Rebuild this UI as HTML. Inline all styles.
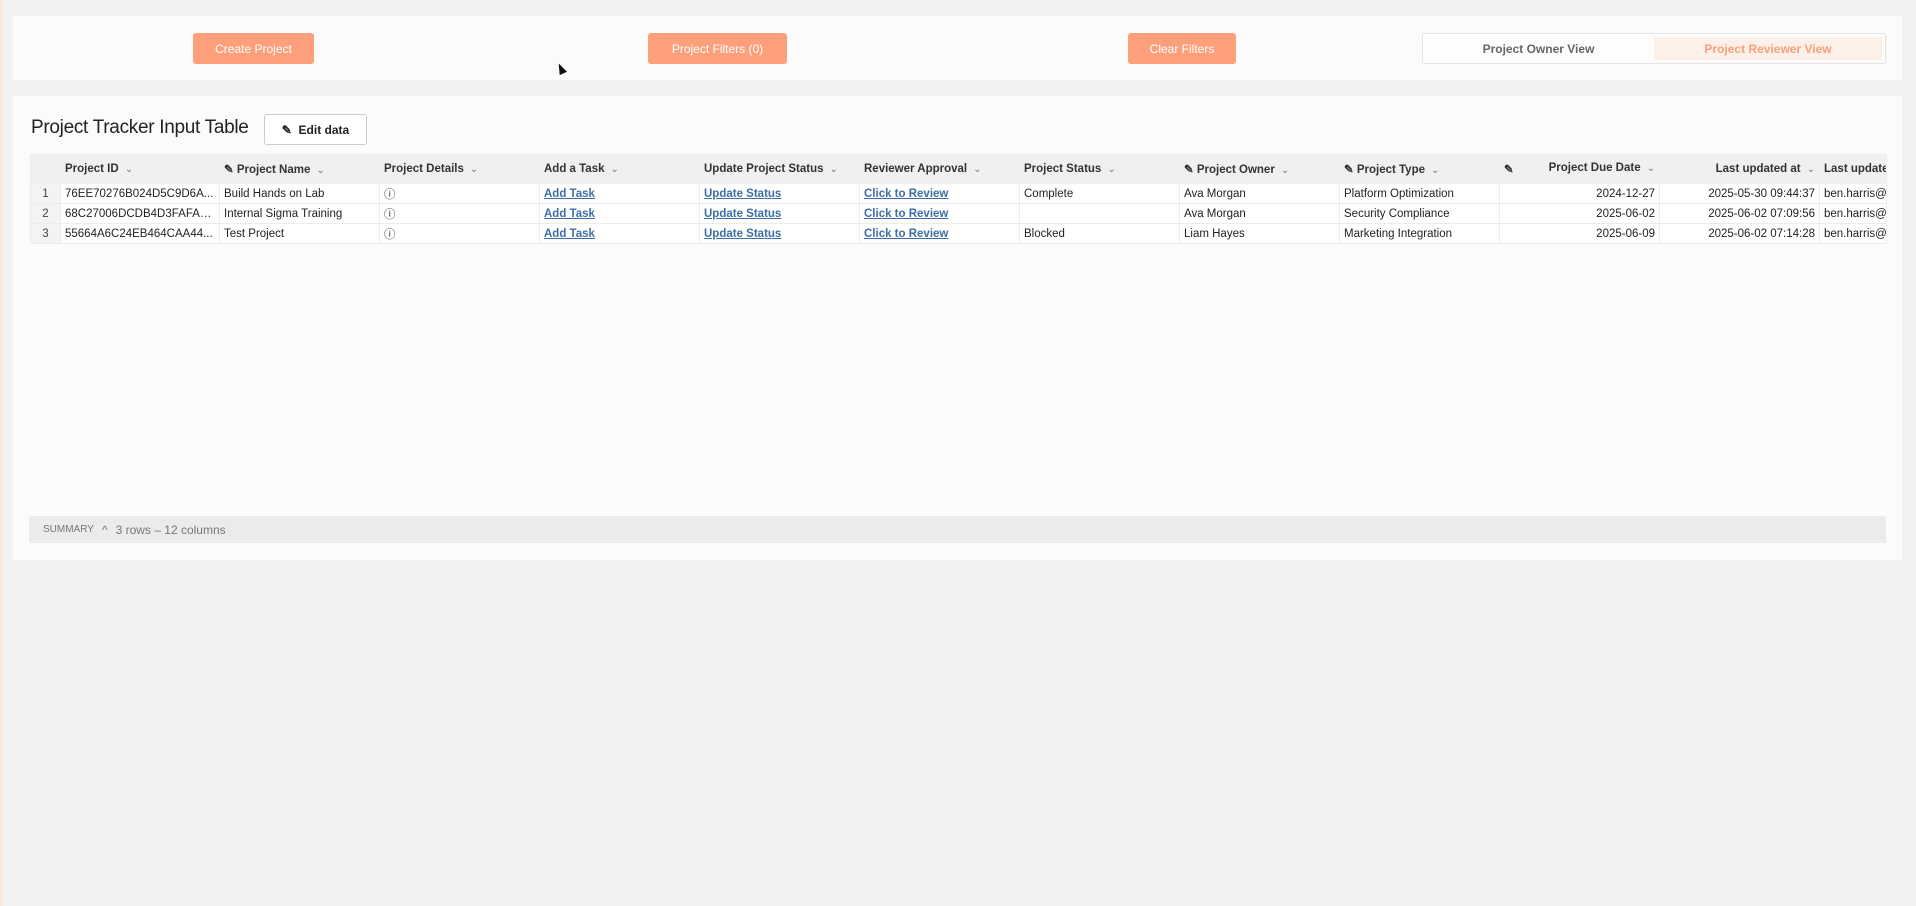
<!DOCTYPE html>
<html><head><meta charset="utf-8"><style>
*{box-sizing:border-box;margin:0;padding:0}
body{width:1916px;height:906px;background:#f2f2f2;font-family:"Liberation Sans",sans-serif;position:relative;overflow:hidden;color:#222}
.p{position:absolute;background:#fbfbfb}
.btn{position:absolute;top:33px;height:31px;background:#fd9f7b;color:#fff;border-radius:3px;font-size:12px;display:flex;align-items:center;justify-content:center}
.tog{position:absolute;left:1422px;top:33px;width:464px;height:31px;border:1px solid #e3e3e3;border-radius:3px;background:#fdfdfd;font-size:12px;font-weight:bold}
.abs{position:absolute}
table{position:absolute;left:30px;top:154px;border-collapse:collapse;font-size:11.5px;table-layout:fixed;width:1856px}
td,th{border:1px solid #ececec;height:20px;padding:0 4px;white-space:nowrap;overflow:hidden;text-overflow:ellipsis}
th{height:29px;background:#f0f0f0;text-align:left;font-weight:600;color:#333;border-color:#f0f0f0}
tr.r td{background:#fff}
td.n{background:#f3f3f3!important;text-align:center;color:#444}
.ch{color:#777;font-weight:normal;font-size:10px;margin-left:6px}
a{color:#3d6ea6;font-weight:600;text-decoration:underline}
.R{text-align:right}
</style></head><body>
<div class="abs" style="left:0;top:0;width:3px;height:906px;background:#fbe6dc"></div>
<div class="p" style="left:13px;top:16px;width:1889px;height:64px"></div>
<div class="btn" style="left:193px;width:121px">Create Project</div>
<div class="btn" style="left:648px;width:139px">Project Filters (0)</div>
<div class="btn" style="left:1128px;width:108px">Clear Filters</div>
<div class="tog">
<div class="abs" style="left:0;top:0;width:231px;height:29px;display:flex;align-items:center;justify-content:center;color:#666">Project Owner View</div>
<div class="abs" style="left:231px;top:3px;width:228px;height:23px;background:#fdf0e9;display:flex;align-items:center;justify-content:center;color:#fa9f7c">Project Reviewer View</div>
</div>
<div class="abs" style="left:557px;top:63px;width:0;height:0;border-left:4px solid transparent;border-right:4px solid transparent;border-bottom:11px solid #111;transform:rotate(-25deg)"></div>
<div class="p" style="left:13px;top:96px;width:1889px;height:464px"></div>
<div class="abs" style="left:31px;top:117px;font-size:19px;color:#222;width:225px;white-space:nowrap;letter-spacing:-0.3px">Project Tracker Input Table</div>
<div class="abs" style="left:264px;top:114px;width:103px;height:31px;border:1px solid #ccc;border-radius:3px;background:#fff;font-size:12px;font-weight:600;display:flex;align-items:center;justify-content:center">✎&nbsp;&nbsp;Edit data</div>
<table>
<colgroup><col style="width:30px"><col style="width:159px"><col style="width:160px"><col style="width:160px"><col style="width:160px"><col style="width:160px"><col style="width:160px"><col style="width:160px"><col style="width:160px"><col style="width:160px"><col style="width:160px"><col style="width:160px"><col style="width:67px"></colgroup>
<tr><th></th><th>Project ID<span class="ch">⌄</span></th><th>✎ Project Name<span class="ch">⌄</span></th><th>Project Details<span class="ch">⌄</span></th><th>Add a Task<span class="ch">⌄</span></th><th>Update Project Status<span class="ch">⌄</span></th><th>Reviewer Approval<span class="ch">⌄</span></th><th>Project Status<span class="ch">⌄</span></th><th>✎ Project Owner<span class="ch">⌄</span></th><th>✎ Project Type<span class="ch">⌄</span></th><th><span style="float:left">✎</span><span style="float:right">Project Due Date<span class="ch">⌄</span></span></th><th class="R">Last updated at<span class="ch">⌄</span></th><th style="text-overflow:clip">Last updated by</th></tr>
<tr class="r"><td class="n">1</td><td>76EE70276B024D5C9D6A...</td><td>Build Hands on Lab</td><td>ⓘ</td><td><a>Add Task</a></td><td><a>Update Status</a></td><td><a>Click to Review</a></td><td>Complete</td><td>Ava Morgan</td><td>Platform Optimization</td><td class="R">2024-12-27</td><td class="R">2025-05-30 09:44:37</td><td style="text-overflow:clip">ben.harris@</td></tr>
<tr class="r"><td class="n">2</td><td>68C27006DCDB4D3FAFA3...</td><td>Internal Sigma Training</td><td>ⓘ</td><td><a>Add Task</a></td><td><a>Update Status</a></td><td><a>Click to Review</a></td><td></td><td>Ava Morgan</td><td>Security Compliance</td><td class="R">2025-06-02</td><td class="R">2025-06-02 07:09:56</td><td style="text-overflow:clip">ben.harris@</td></tr>
<tr class="r"><td class="n">3</td><td>55664A6C24EB464CAA44...</td><td>Test Project</td><td>ⓘ</td><td><a>Add Task</a></td><td><a>Update Status</a></td><td><a>Click to Review</a></td><td>Blocked</td><td>Liam Hayes</td><td>Marketing Integration</td><td class="R">2025-06-09</td><td class="R">2025-06-02 07:14:28</td><td style="text-overflow:clip">ben.harris@</td></tr>
</table>
<div class="abs" style="left:29px;top:516px;width:1857px;height:27px;background:#ebebeb;border-radius:2px;font-size:12px;color:#777;display:flex;align-items:center;padding-left:14px"><span style="font-size:10px">SUMMARY</span><span style="margin:0 8px">^</span><span>3 rows – 12 columns</span></div>
</body></html>
